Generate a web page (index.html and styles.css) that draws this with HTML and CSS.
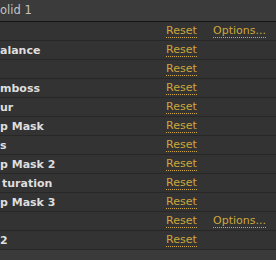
FILE: index.html
```html
<html>
<head>
  <title>Effect Controls</title>
  <link rel="stylesheet" href="styles.css">
</head>
<body>
  <div class="panel">
    <!-- Layer title bar -->
    <div class="panel-header">olid 1</div>

    <!-- Effect rows -->
    <div class="effect-list">
      <div class="effect-row"><span class="effect-name"></span><a class="link">Reset</a><a class="link">Options...</a></div>
      <div class="effect-row"><span class="effect-name">alance</span><a class="link">Reset</a></div>
      <div class="effect-row"><span class="effect-name"></span><a class="link">Reset</a></div>
      <div class="effect-row"><span class="effect-name">mboss</span><a class="link">Reset</a></div>
      <div class="effect-row"><span class="effect-name">ur</span><a class="link">Reset</a></div>
      <div class="effect-row"><span class="effect-name">p Mask</span><a class="link">Reset</a></div>
      <div class="effect-row"><span class="effect-name">s</span><a class="link">Reset</a></div>
      <div class="effect-row"><span class="effect-name">p Mask 2</span><a class="link">Reset</a></div>
      <div class="effect-row"><span class="effect-name indent">turation</span><a class="link">Reset</a></div>
      <div class="effect-row"><span class="effect-name">p Mask 3</span><a class="link">Reset</a></div>
      <div class="effect-row"><span class="effect-name"></span><a class="link">Reset</a><a class="link">Options...</a></div>
      <div class="effect-row"><span class="effect-name">2</span><a class="link">Reset</a></div>
    </div>
  </div>
</body>
</html>
```

FILE: styles.css
```css
/* Page */
body {
  margin: 0;
  background: #3a3a3a;
  font-family: 'DejaVu Sans', sans-serif;
  font-size: 11px;
}

.panel {
  width: 276px;
  overflow: hidden;
}

/* Title bar */
.panel-header {
  height: 21px;
  line-height: 20px;
  color: #c4c4c4;
  font-size: 11.5px;
  background: #3b3b3b;
  border-bottom: 1px solid #151515;
}

/* Rows */
.effect-list {
  background: #333333;
}

.effect-row {
  display: grid;
  grid-template-columns: 166px 47px 1fr;
  align-items: center;
  height: 18px;
  border-bottom: 1px solid #272727;
  white-space: nowrap;
}

.effect-name {
  color: #dedede;
  font-weight: bold;
  overflow: hidden;
}

.effect-name.indent {
  padding-left: 2px;
}

/* Reset / Options links */
.link {
  justify-self: start;
  color: #cfa63c;
  line-height: 13px;
  border-bottom: 1px dotted #cfa63c;
  cursor: pointer;
}
```
